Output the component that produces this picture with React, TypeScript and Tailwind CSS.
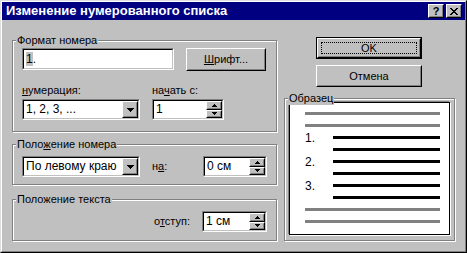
import React from "react";

type BoxProps = { className?: string; children?: React.ReactNode };

// classic 3d raised edge (buttons)
const Raised = ({ className = "", children }: BoxProps) => (
  <div className={`border border-white border-r-black border-b-black bg-[#c0c0c0] ${className}`}>
    <div className="flex h-full w-full items-center justify-center border border-[#c0c0c0] border-r-[#808080] border-b-[#808080]">
      {children}
    </div>
  </div>
);

// classic sunken edge (text fields)
const Sunken = ({ className = "", children }: BoxProps) => (
  <div className={`border border-[#808080] border-r-white border-b-white ${className}`}>
    <div className="flex h-full w-full items-center border border-black border-r-[#c0c0c0] border-b-[#c0c0c0] bg-white">
      {children}
    </div>
  </div>
);

const Group = ({ title, className = "", children }: BoxProps & { title: React.ReactNode }) => (
  <div className={`relative border border-[#808080] shadow-[inset_1px_1px_0_#fff,1px_1px_0_#fff] ${className}`}>
    <span className="absolute -top-[7px] left-[3px] bg-[#c0c0c0] px-[1px] leading-[13px]">{title}</span>
    {children}
  </div>
);

const ArrowDown = ({ w = 7 }: { w?: number }) => (
  <svg width={w} height={(w + 1) / 2} viewBox={`0 0 ${w} ${(w + 1) / 2}`} shapeRendering="crispEdges">
    <polygon points={`0,0 ${w},0 ${w / 2},${(w + 1) / 2}`} fill="#000" />
  </svg>
);

const ArrowUp = ({ w = 5 }: { w?: number }) => (
  <svg width={w} height={(w + 1) / 2} viewBox={`0 0 ${w} ${(w + 1) / 2}`} shapeRendering="crispEdges">
    <polygon points={`0,${(w + 1) / 2} ${w},${(w + 1) / 2} ${w / 2},0`} fill="#000" />
  </svg>
);

const Combo = ({ value, className = "" }: { value: string; className?: string }) => (
  <Sunken className={`h-[21px] ${className}`}>
    <span className="flex-1 pl-[2px] text-[12px] leading-[15px]">{value}</span>
    <Raised className="h-full w-[16px]">
      <ArrowDown />
    </Raised>
  </Sunken>
);

const Spinner = ({ value, className = "" }: { value: string; className?: string }) => (
  <Sunken className={`h-[21px] ${className}`}>
    <span className="flex-1 pl-[2px] text-[12px] leading-[15px]">{value}</span>
    <div className="flex h-full w-[16px] flex-col">
      <Raised className="flex-1">
        <ArrowUp />
      </Raised>
      <Raised className="flex-1">
        <ArrowDown w={5} />
      </Raised>
    </div>
  </Sunken>
);

const Line = ({ black }: { black?: boolean }) =>
  black ? <div className="ml-[28px] h-[3px] w-[107px] bg-black" /> : <div className="h-[3px] w-[135px] bg-[#808080]" />;

export default function App() {
  return (
    <div className="h-[253px] w-[467px] border border-[#dfdfdf] border-r-black border-b-black bg-[#c0c0c0] font-['Liberation_Sans',Arial,sans-serif] text-[11px] text-black">
      <div className="flex h-full flex-col border border-white border-r-[#808080] border-b-[#808080]">
        {/* title bar */}
        <div className="flex h-[18px] items-center bg-[#000080] pl-[4px] pr-[3px]">
          <span className="flex-1 text-[13px] font-bold leading-[14px] text-white">Изменение нумерованного списка</span>
          <Raised className="h-[14px] w-[16px]">
            <span className="text-[11px] font-bold leading-[10px]">?</span>
          </Raised>
          <Raised className="ml-[2px] h-[14px] w-[16px]">
            <svg width="8" height="7" viewBox="0 0 8 7" shapeRendering="crispEdges">
              <path d="M0 0h2v1h-2zM6 0h2v1h-2zM1 1h2v1h-2zM5 1h2v1h-2zM2 2h4v1h-4zM3 3h2v1h-2zM2 4h4v1h-4zM1 5h2v1h-2zM5 5h2v1h-2zM0 6h2v1h-2zM6 6h2v1h-2z" fill="#000" />
            </svg>
          </Raised>
        </div>

        <div className="flex pl-[10px] pt-[17px]">
          {/* left column */}
          <div className="mt-[3px] flex w-[265px] flex-col">
            <Group title="Формат номера" className="h-[92px] px-[9px] pt-[7px]">
              <div className="flex items-start">
                <Sunken className="h-[22px] w-[152px]">
                  <span className="pl-[2px] text-[12px] leading-[15px]">
                    <span className="bg-[#c0c0c0]">1</span>.
                  </span>
                </Sunken>
                <Raised className="ml-[12px] h-[23px] w-[80px]">
                  <span>
                    <span className="underline">Ш</span>рифт...
                  </span>
                </Raised>
              </div>
              <div className="mt-[13px] flex">
                <div className="flex flex-col">
                  <span className="leading-[13px]">
                    <span className="underline">н</span>умерация:
                  </span>
                  <Combo value="1, 2, 3, ..." className="mt-[2px] w-[118px]" />
                </div>
                <div className="ml-[12px] flex flex-col">
                  <span className="leading-[13px]">
                    на<span className="underline">ч</span>ать с:
                  </span>
                  <Spinner value="1" className="mt-[2px] w-[72px]" />
                </div>
              </div>
            </Group>

            <Group title={<>Поло<span className="underline">ж</span>ение номера</>} className="mt-[12px] flex h-[41px] items-start px-[9px] pt-[11px]">
              <Combo value="По левому краю" className="w-[118px]" />
              <span className="ml-[12px] mt-[4px] leading-[13px]">
                н<span className="underline">а</span>:
              </span>
              <Spinner value="0 см" className="ml-auto w-[64px]" />
            </Group>

            <Group title="Положение текста" className="mt-[14px] flex h-[42px] items-start justify-end px-[9px] pt-[11px]">
              <span className="mt-[4px] leading-[13px]">
                о<span className="underline">т</span>ступ:
              </span>
              <Spinner value="1 см" className="ml-[12px] w-[65px]" />
            </Group>
          </div>

          {/* right column */}
          <div className="ml-[7px] flex w-[171px] flex-col">
            <div className="ml-[32px] h-[22px] w-[106px] border border-black">
              <Raised className="relative h-full w-full">
                <span>OK</span>
                <div className="absolute inset-[3px] border border-dotted border-black" />
              </Raised>
            </div>
            <Raised className="ml-[32px] mt-[6px] h-[22px] w-[106px]">
              <span>Отмена</span>
            </Raised>

            <Group title="Образец" className="mt-[11px] h-[143px]">
              <div className="ml-[4px] mt-[3px] h-[133px] w-[161px] border border-black bg-white shadow-[-1px_-1px_0_#808080,1px_1px_0_#fff]">
                <div className="flex flex-col gap-[9px] pl-[15px] pt-[9px]">
                  <Line />
                  <Line />
                  {[1, 2, 3].map((n) => (
                    <React.Fragment key={n}>
                      <div className="flex h-[3px] items-center">
                        <span className="w-[28px] text-[12px] leading-[12px]">{n}.</span>
                        <div className="h-[3px] w-[107px] bg-black" />
                      </div>
                      <Line black />
                    </React.Fragment>
                  ))}
                  <Line />
                  <Line />
                </div>
              </div>
            </Group>
          </div>
        </div>
      </div>
    </div>
  );
}
